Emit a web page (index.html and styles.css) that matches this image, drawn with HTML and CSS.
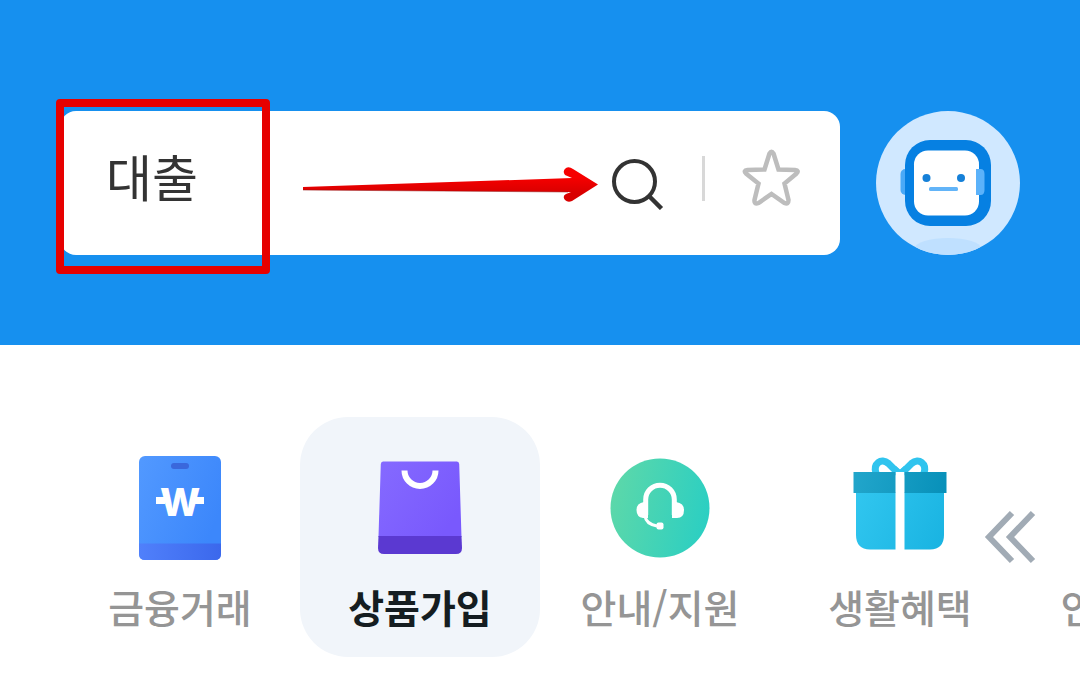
FILE: index.html
```html
<!DOCTYPE html>
<html lang="ko">
<head>
  <meta charset="UTF-8">
  <meta name="viewport" content="width=device-width, initial-scale=1.0">
  <title>대출 검색</title>
  <link rel="stylesheet" href="styles.css">
</head>
<body>

  <!-- Search header -->
  <header class="header">
    <form class="search">
      <input class="search-input" type="text" aria-label="검색어" value="대출">
      <button class="icon-btn" type="button" aria-label="검색">
        <svg width="54" height="64" viewBox="0 0 54 64" fill="none" stroke="#333" stroke-width="4">
          <circle cx="23.500" cy="35.500" r="20.500"/>
          <path d="M38 50L50.500 62.500" stroke-width="4.500"/>
        </svg>
      </button>
      <span class="divider"></span>
      <button class="icon-btn" type="button" aria-label="즐겨찾기">
        <svg width="58" height="58" viewBox="0 0 58 58" fill="none" stroke="#bdbdbd" stroke-width="4.500" stroke-linejoin="miter">
          <path d="M27.500 4.500Q29.500 1 31.500 4.500L36.500 20.500L53 21Q57.500 21.500 54.500 24.500L42.500 34.500L46.500 51Q46.500 56 42.500 54L29.500 45L16.500 54Q12 56 12.500 51L16.500 34.500L4 24.500Q1 21.500 5.500 21L22.500 20.500Z"/>
        </svg>
      </button>
    </form>

    <button class="avatar" type="button" aria-label="챗봇">
      <svg width="144" height="144" viewBox="0 0 144 144">
        <defs>
          <clipPath id="avatarClip"><circle cx="72" cy="72" r="72"/></clipPath>
        </defs>
        <circle cx="72" cy="72" r="72" fill="#d0e8ff"/>
        <ellipse cx="72" cy="137" rx="33" ry="10" fill="#bfe0ff" clip-path="url(#avatarClip)"/>
        <rect x="24.500" y="58" width="12" height="26" rx="5" fill="#4aa9f7"/>
        <rect x="29" y="29" width="86" height="86" rx="25" fill="#0680e2"/>
        <rect x="38" y="39.500" width="65" height="65" rx="14" fill="#fff"/>
        <path d="M100 58H104.500Q108.500 58 108.500 63V79Q108.500 84 104.500 84H100Z" fill="#5bb2fa"/>
        <circle cx="50.500" cy="67" r="4" fill="#1580d8"/>
        <circle cx="85" cy="67" r="4" fill="#1580d8"/>
        <rect x="53" y="76" width="29" height="4" rx="1.500" fill="#62b4f8"/>
      </svg>
    </button>

    <!-- Guide marks -->
    <div class="mark-box"></div>
    <svg class="mark-arrow" width="300" height="42" viewBox="0 0 300 42">
      <defs>
        <linearGradient id="arrowFill" x1="0" y1="0" x2="0" y2="1">
          <stop offset="0.300" stop-color="#f60000"/>
          <stop offset="0.750" stop-color="#d80000"/>
        </linearGradient>
      </defs>
      <path d="M3 23L272 14L265 11Q262 7 266 4Q269 2 273 5L298 20.500L272 37Q268 39 265 36Q262 32 266 30L271 28L3 26Z" fill="url(#arrowFill)"/>
      <path d="M3 26L268 28" stroke="#8a1010" stroke-width="0.500"/>
    </svg>
  </header>

  <!-- Category tabs -->
  <nav class="tabs">
    <a class="tab" href="#">
      <svg class="tab-icon" viewBox="0 0 120 120">
        <defs>
          <linearGradient id="cardFill" x1="0" y1="0" x2="1" y2="0.500">
            <stop offset="0" stop-color="#5299ff"/>
            <stop offset="1" stop-color="#3c87fb"/>
          </linearGradient>
          <linearGradient id="cardFoot">
            <stop offset="0" stop-color="#5080fb"/>
            <stop offset="1" stop-color="#3b68ec"/>
          </linearGradient>
        </defs>
        <rect x="19" y="9" width="82" height="104" rx="6" fill="url(#cardFill)"/>
        <path d="M19 96.500H101V107Q101 113 95 113H25Q19 113 19 107Z" fill="url(#cardFoot)"/>
        <rect x="51" y="16" width="18" height="6" rx="3" fill="#3a68dc"/>
        <path d="M36 50H45V57H36ZM75 50H84V57H75Z" fill="#fff"/>
        <text class="won" x="60" y="69" text-anchor="middle">W</text>
      </svg>
      <span class="tab-label">금융거래</span>
    </a>

    <a class="tab active" href="#" aria-current="page">
      <svg class="tab-icon" viewBox="0 0 120 120">
        <defs>
          <linearGradient id="bagFill" x1="0" y1="0" x2="1" y2="0.600">
            <stop offset="0" stop-color="#856aff"/>
            <stop offset="1" stop-color="#7959fd"/>
          </linearGradient>
        </defs>
        <path d="M23 14.500H97Q99 14.500 99.200 17L101.500 90H18.500L20.800 17Q21 14.500 23 14.500Z" fill="url(#bagFill)"/>
        <path d="M18.500 89H101.500L102 101Q102 107 96 107H24Q18 107 18 101Z" fill="#5b39d1"/>
        <path d="M44.500 23.500A15.500 15.500 0 0 0 75.500 23.500" fill="none" stroke="#fff" stroke-width="6"/>
      </svg>
      <span class="tab-label">상품가입</span>
    </a>

    <a class="tab" href="#">
      <svg class="tab-icon" viewBox="0 0 120 120">
        <defs>
          <linearGradient id="helpFill" x1="0" y1="0.300" x2="1" y2="0.500">
            <stop offset="0" stop-color="#5dd8a9"/>
            <stop offset="1" stop-color="#2ccfc2"/>
          </linearGradient>
        </defs>
        <circle cx="60" cy="61" r="49.500" fill="url(#helpFill)"/>
        <path d="M45.700 68V52.500A14.300 14.300 0 0 1 74.300 52.500V68" fill="none" stroke="#fff" stroke-width="5"/>
        <path d="M48 55H44Q36.500 56 36.500 63Q36.500 70 43 71H48ZM72 55H76Q84 56 84 63Q84 71 77 71H72Z" fill="#fff"/>
        <path d="M45 69Q46 77 57 79" fill="none" stroke="#fff" stroke-width="3"/>
        <rect x="56.500" y="75.500" width="7" height="7" rx="2" fill="#fff"/>
      </svg>
      <span class="tab-label">안내/지원</span>
    </a>

    <a class="tab" href="#">
      <svg class="tab-icon" viewBox="0 0 120 120">
        <defs>
          <linearGradient id="giftFill" gradientUnits="userSpaceOnUse" x1="16" y1="46" x2="104" y2="90">
            <stop offset="0" stop-color="#31c6ef"/>
            <stop offset="1" stop-color="#1ab4e2"/>
          </linearGradient>
          <linearGradient id="lidFill" gradientUnits="userSpaceOnUse" x1="13" y1="25" x2="107" y2="46">
            <stop offset="0" stop-color="#22a6cb"/>
            <stop offset="1" stop-color="#0790b9"/>
          </linearGradient>
        </defs>
        <path d="M58 26L48.500 16.500C41 10 33 17 36 26M62 26L71.500 16.500C79 10 87 17 84 26" fill="none" stroke="#30c4ee" stroke-width="7"/>
        <path d="M56 19L60 22.500L64 19L68 26H52Z" fill="#30c4ee"/>
        <path d="M16 45H55.500V102.500H30Q16 102 16 88ZM64.500 45H104V88Q104 102 90 102.500H64.500Z" fill="url(#giftFill)"/>
        <path d="M55.500 25H64.500V46H55.500Z" fill="#fff"/>
        <path d="M13.500 25H55.500V46H13.500ZM64.500 25H106.500V46H64.500Z" fill="url(#lidFill)"/>
      </svg>
      <span class="tab-label">생활혜택</span>
    </a>

    <a class="tab" href="#">
      <svg class="tab-icon" viewBox="0 0 120 120"></svg>
      <span class="tab-label">인증/보안</span>
    </a>

    <button class="more-btn" type="button" aria-label="더보기">
      <svg width="54" height="54" viewBox="0 0 54 54" fill="none" stroke="#a1abb5" stroke-width="6">
        <path d="M28 3L5 27L28 51M49 3L26 27L49 51"/>
      </svg>
    </button>
  </nav>

</body>
</html>
```

FILE: styles.css
```css
* {
  box-sizing: border-box;
}
body {
  margin: 0;
  font-family: "Noto Sans CJK KR", sans-serif;
  background: #fff;
  overflow-x: hidden;
}
button {
  padding: 0;
  border: none;
  background: none;
  cursor: pointer;
}
svg {
  display: block;
}
.header {
  position: relative;
  display: flex;
  gap: 36px;
  padding: 111px 60px 90px;
  background: #1690ef;
}
.search {
  flex: 1;
  display: flex;
  align-items: center;
  min-width: 0;
  height: 144px;
  padding: 0 40px 10px 46px;
  background: #fff;
  border-radius: 16px;
}
.search-input {
  flex: 1;
  min-width: 0;
  padding: 0 0 6px;
  border: none;
  outline: none;
  background: none;
  font-family: inherit;
  font-size: 50px;
  font-weight: 400;
  line-height: 72px;
  color: #333;
}
.divider {
  width: 3px;
  height: 45px;
  margin: 0 37px;
  background: #d8d8d8;
}
.avatar {
  border-radius: 50%;
}

/* Guide marks over the search bar */
.mark-box {
  position: absolute;
  left: 56px;
  top: 99px;
  width: 214px;
  height: 175px;
  border: 8px solid #e60000;
  border-radius: 4px;
}
.mark-arrow {
  position: absolute;
  left: 300px;
  top: 164px;
}

.tabs {
  position: relative;
  display: flex;
  padding: 72px 0 40px 60px;
  overflow: hidden;
}
.tab {
  flex: 0 0 240px;
  display: flex;
  flex-direction: column;
  align-items: center;
  gap: 11px;
  padding: 30px 0 23px;
  border-radius: 48px;
  color: #959595;
  text-decoration: none;
}
.tab.active {
  background: #f1f5fa;
  color: #151d21;
}
.tab-icon {
  width: 120px;
  height: 120px;
}
.tab-label {
  font-size: 39px;
  font-weight: 500;
  line-height: 56px;
  white-space: nowrap;
}
.tab.active .tab-label {
  font-weight: 700;
}
.won {
  font-family: Inter, sans-serif;
  font-size: 38px;
  font-weight: 800;
  fill: #fff;
}
.more-btn {
  position: absolute;
  top: 165px;
  right: 42px;
}
```
